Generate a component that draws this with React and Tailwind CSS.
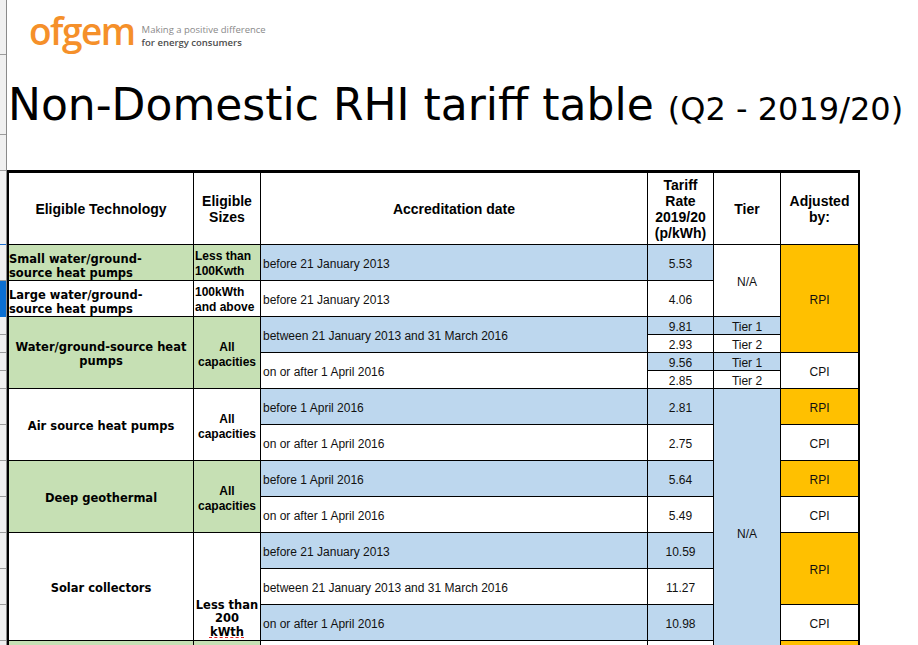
import React from 'react';

const arial = "font-['Liberation_Sans',Arial,sans-serif]";
const verdana = "font-['DejaVu_Sans',Verdana,sans-serif]";

// row header strip on the left (spreadsheet row boundaries)
const strip = [
  { h: 'h-[55px]', cls: 'border-b border-[#9c9c9c]' },
  { h: 'h-[80px]', cls: 'border-b border-[#9c9c9c]' },
  { h: 'h-[36px]', cls: 'border-b border-[#9c9c9c]' },
  { h: 'h-[74px]', cls: 'border-b border-[#1b6fd0]' },
  { h: 'h-[36px]', cls: 'border-b border-[#9c9c9c]' },
  { h: 'h-[36px]', cls: 'bg-[#0b6fd2] border-b border-[#0b6fd2]' },
  { h: 'h-[18px]', cls: 'border-b border-[#9c9c9c]' },
  { h: 'h-[18px]', cls: 'border-b border-[#9c9c9c]' },
  { h: 'h-[18px]', cls: 'border-b border-[#9c9c9c]' },
  { h: 'h-[18px]', cls: 'border-b border-[#9c9c9c]' },
  { h: 'h-[36px]', cls: 'border-b border-[#9c9c9c]' },
  { h: 'h-[36px]', cls: 'border-b border-[#9c9c9c]' },
  { h: 'h-[36px]', cls: 'border-b border-[#9c9c9c]' },
  { h: 'h-[36px]', cls: 'border-b border-[#9c9c9c]' },
  { h: 'h-[36px]', cls: 'border-b border-[#9c9c9c]' },
  { h: 'h-[36px]', cls: 'border-b border-[#9c9c9c]' },
  { h: 'h-[36px]', cls: 'border-b border-[#9c9c9c]' },
  { h: 'h-[36px]', cls: 'border-b border-[#9c9c9c]' },
];

const green = 'bg-[#c6e0b4]';
const blue = 'bg-[#bdd7ee]';
const orange = 'bg-[#ffc000]';
const white = 'bg-white';

const dates = [
  { pos: 'col-start-3 row-start-2 row-span-2', bg: blue, text: 'before 21 January 2013' },
  { pos: 'col-start-3 row-start-4 row-span-2', bg: white, text: 'before 21 January 2013' },
  { pos: 'col-start-3 row-start-6 row-span-2', bg: blue, text: 'between 21 January 2013 and 31 March 2016' },
  { pos: 'col-start-3 row-start-8 row-span-2', bg: white, text: 'on or after 1 April 2016' },
  { pos: 'col-start-3 row-start-10 row-span-2', bg: blue, text: 'before 1 April 2016' },
  { pos: 'col-start-3 row-start-12 row-span-2', bg: white, text: 'on or after 1 April 2016' },
  { pos: 'col-start-3 row-start-14 row-span-2', bg: blue, text: 'before 1 April 2016' },
  { pos: 'col-start-3 row-start-16 row-span-2', bg: white, text: 'on or after 1 April 2016' },
  { pos: 'col-start-3 row-start-18 row-span-2', bg: blue, text: 'before 21 January 2013' },
  { pos: 'col-start-3 row-start-20 row-span-2', bg: white, text: 'between 21 January 2013 and 31 March 2016' },
  { pos: 'col-start-3 row-start-22 row-span-2', bg: blue, text: 'on or after 1 April 2016' },
  { pos: 'col-start-3 row-start-24 row-span-2', bg: white, text: '' },
];

const rates = [
  { pos: 'col-start-4 row-start-2 row-span-2', bg: blue, text: '5.53' },
  { pos: 'col-start-4 row-start-4 row-span-2', bg: white, text: '4.06' },
  { pos: 'col-start-4 row-start-6', bg: blue, text: '9.81' },
  { pos: 'col-start-4 row-start-7', bg: white, text: '2.93' },
  { pos: 'col-start-4 row-start-8', bg: blue, text: '9.56' },
  { pos: 'col-start-4 row-start-9', bg: white, text: '2.85' },
  { pos: 'col-start-4 row-start-10 row-span-2', bg: blue, text: '2.81' },
  { pos: 'col-start-4 row-start-12 row-span-2', bg: white, text: '2.75' },
  { pos: 'col-start-4 row-start-14 row-span-2', bg: blue, text: '5.64' },
  { pos: 'col-start-4 row-start-16 row-span-2', bg: white, text: '5.49' },
  { pos: 'col-start-4 row-start-18 row-span-2', bg: blue, text: '10.59' },
  { pos: 'col-start-4 row-start-20 row-span-2', bg: white, text: '11.27' },
  { pos: 'col-start-4 row-start-22 row-span-2', bg: blue, text: '10.98' },
  { pos: 'col-start-4 row-start-24 row-span-2', bg: white, text: '' },
];

const tiers = [
  { pos: 'col-start-5 row-start-2 row-span-4', bg: white, text: 'N/A' },
  { pos: 'col-start-5 row-start-6', bg: blue, text: 'Tier 1' },
  { pos: 'col-start-5 row-start-7', bg: white, text: 'Tier 2' },
  { pos: 'col-start-5 row-start-8', bg: blue, text: 'Tier 1' },
  { pos: 'col-start-5 row-start-9', bg: white, text: 'Tier 2' },
  { pos: 'col-start-5 row-start-10 row-span-16', bg: blue, text: 'N/A' },
];

const adjusted = [
  { pos: 'col-start-6 row-start-2 row-span-6', bg: orange, text: 'RPI' },
  { pos: 'col-start-6 row-start-8 row-span-2', bg: white, text: 'CPI' },
  { pos: 'col-start-6 row-start-10 row-span-2', bg: orange, text: 'RPI' },
  { pos: 'col-start-6 row-start-12 row-span-2', bg: white, text: 'CPI' },
  { pos: 'col-start-6 row-start-14 row-span-2', bg: orange, text: 'RPI' },
  { pos: 'col-start-6 row-start-16 row-span-2', bg: white, text: 'CPI' },
  { pos: 'col-start-6 row-start-18 row-span-4', bg: orange, text: 'RPI' },
  { pos: 'col-start-6 row-start-22 row-span-2', bg: white, text: 'CPI' },
  { pos: 'col-start-6 row-start-24 row-span-2', bg: orange, text: '' },
];

function Header({ pos, children }) {
  return (
    <div className={`${pos} bg-white flex items-center justify-center text-center ${arial} font-bold text-[14px] leading-[16px] text-black`}>
      {children}
    </div>
  );
}

function Tech({ pos, bg, children, left }) {
  return (
    <div
      className={`${pos} ${bg} flex flex-col ${left ? 'justify-end items-start text-left' : 'justify-center items-center text-center pt-[3px]'} ${verdana} font-bold text-[11.5px] leading-[14px] text-black`}
    >
      {children}
    </div>
  );
}

function Size({ pos, bg, children, left }) {
  return (
    <div
      className={`${pos} ${bg} flex flex-col ${left ? 'justify-end items-start text-left pl-[1px] pb-[1px]' : 'justify-center items-center text-center pt-[4px]'} ${arial} font-bold text-[12px] leading-[15px] text-black`}
    >
      {children}
    </div>
  );
}

function Plain({ pos, bg, text, center }) {
  return (
    <div
      className={`${pos} ${bg} flex items-center pt-[2px] ${center ? 'justify-center' : 'justify-start pl-[2px]'} ${arial} text-[12px] leading-[14px] text-[#111]`}
    >
      {text}
    </div>
  );
}

export default function App() {
  return (
    <div className="w-[918px] h-[645px] overflow-hidden bg-white flex">
      <div className="w-[7px] h-full shrink-0 bg-[#f0f0f0] border-r border-[#8a8a8a] flex flex-col">
        {strip.map((s, i) => (
          <div key={i} className={`${s.h} ${s.cls} shrink-0`} />
        ))}
      </div>

      <div className="flex-1 flex flex-col">
        <div className="h-[70px] shrink-0 flex items-start pl-[22px] pt-[11px] gap-[7px]">
          <span className="font-['Open_Sans',sans-serif] font-semibold text-[37px] leading-[40px] tracking-[-1.5px] text-[#f5902a]">
            ofgem
          </span>
          <div className="flex flex-col pt-[12px] font-['Open_Sans',sans-serif] text-[9.5px] leading-[13px]">
            <span className="text-[#8a8a8a]">Making a positive difference</span>
            <span className="text-[#4d4d4d] font-semibold">for energy consumers</span>
          </div>
        </div>

        <div className="h-[100px] shrink-0 flex items-start pt-[10px] pl-[1px]">
          <h1 className="font-['DejaVu_Sans',Tahoma,sans-serif] text-[44px] leading-[50px] text-black whitespace-nowrap">
            Non-Domestic RHI tariff table{' '}
            <span className="text-[32px]">(Q2 - 2019/20)</span>
          </h1>
        </div>

        <div className="w-[853px] shrink-0 grid grid-cols-[184px_66px_386px_65px_66px_77px] grid-rows-[71px_repeat(24,17px)] gap-px bg-black border-t-[3px] border-x-2 border-black">
          <Header pos="col-start-1 row-start-1">Eligible Technology</Header>
          <Header pos="col-start-2 row-start-1">Eligible<br />Sizes</Header>
          <Header pos="col-start-3 row-start-1">Accreditation date</Header>
          <Header pos="col-start-4 row-start-1">Tariff<br />Rate<br />2019/20<br />(p/kWh)</Header>
          <Header pos="col-start-5 row-start-1">Tier</Header>
          <Header pos="col-start-6 row-start-1">Adjusted<br />by:</Header>

          <Tech pos="col-start-1 row-start-2 row-span-2" bg={green} left>
            <span>Small water/ground-</span>
            <span>source heat pumps</span>
          </Tech>
          <Tech pos="col-start-1 row-start-4 row-span-2" bg={white} left>
            <span>Large water/ground-</span>
            <span>source heat pumps</span>
          </Tech>
          <Tech pos="col-start-1 row-start-6 row-span-4" bg={green}>
            <span>Water/ground-source heat</span>
            <span>pumps</span>
          </Tech>
          <Tech pos="col-start-1 row-start-10 row-span-4" bg={white}>
            <span>Air source heat pumps</span>
          </Tech>
          <Tech pos="col-start-1 row-start-14 row-span-4" bg={green}>
            <span>Deep geothermal</span>
          </Tech>
          <Tech pos="col-start-1 row-start-18 row-span-6" bg={white}>
            <span>Solar collectors</span>
          </Tech>
          <Tech pos="col-start-1 row-start-24 row-span-2" bg={green} />

          <Size pos="col-start-2 row-start-2 row-span-2" bg={green} left>
            <span>Less than</span>
            <span>100Kwth</span>
          </Size>
          <Size pos="col-start-2 row-start-4 row-span-2" bg={white} left>
            <span>100kWth</span>
            <span>and above</span>
          </Size>
          <Size pos="col-start-2 row-start-6 row-span-4" bg={green}>
            <span>All</span>
            <span>capacities</span>
          </Size>
          <Size pos="col-start-2 row-start-10 row-span-4" bg={white}>
            <span>All</span>
            <span>capacities</span>
          </Size>
          <Size pos="col-start-2 row-start-14 row-span-4" bg={green}>
            <span>All</span>
            <span>capacities</span>
          </Size>
          <div className={`col-start-2 row-start-18 row-span-6 bg-white flex flex-col justify-end items-center text-center pb-[1px] ${verdana} font-bold text-[11.5px] leading-[13.5px] text-black`}>
            <span>Less than</span>
            <span>200</span>
            <span className="underline decoration-dashed decoration-[#e02020] underline-offset-[1px]">kWth</span>
          </div>
          <Size pos="col-start-2 row-start-24 row-span-2" bg={green} />

          {dates.map((d, i) => (
            <Plain key={'d' + i} {...d} />
          ))}
          {rates.map((d, i) => (
            <Plain key={'r' + i} {...d} center />
          ))}
          {tiers.map((d, i) => (
            <Plain key={'t' + i} {...d} center />
          ))}
          {adjusted.map((d, i) => (
            <Plain key={'a' + i} {...d} center />
          ))}
        </div>
      </div>
    </div>
  );
}
